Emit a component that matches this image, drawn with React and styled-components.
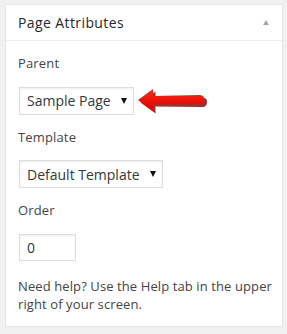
import React from 'react'
import styled, { createGlobalStyle } from 'styled-components'

const GlobalStyle = createGlobalStyle`
  html, body {
    margin: 0;
    background: #f1f1f1;
  }
  body {
    font-family: "Open Sans", "Liberation Sans", sans-serif;
    color: #444;
  }
`

const Postbox = styled.div`
  box-sizing: border-box;
  width: 278px;
  height: 323px;
  margin: 4px 0 0 5px;
  background: #fff;
  border: 1px solid #e5e5e5;
  box-shadow: 0 1px 1px rgba(0, 0, 0, 0.04);
`

const Header = styled.div`
  display: flex;
  align-items: center;
  justify-content: space-between;
  height: 35px;
  padding: 0 13px 0 12px;
  border-bottom: 1px solid #eee;
  font-size: 14px;
  letter-spacing: 0.4px;
  color: #23282d;
`

const Toggle = styled.span`
  width: 0;
  height: 0;
  border-left: 3px solid transparent;
  border-right: 3px solid transparent;
  border-bottom: 5px solid #a0a5aa;
`

const Inside = styled.div`
  padding: 0 6px 12px 12px;
`

const Label = styled.p`
  margin: 13px 0;
  font-size: 13px;
  line-height: 19.5px;
  letter-spacing: 0.15px;
  color: #444;
`

const Row = styled.div`
  display: flex;
  align-items: center;
  margin-left: 1px;
  margin-bottom: ${(p) => p.$gap || 0}px;
`

const SelectBox = styled.div`
  box-sizing: border-box;
  display: flex;
  align-items: center;
  height: 28px;
  padding: 0 6px 0 7px;
  border: 1px solid #ddd;
  box-shadow: inset 0 1px 2px rgba(0, 0, 0, 0.07);
  background: #fff;
  font-size: 14px;
  color: #32373c;
`

const Caret = styled.span`
  width: 0;
  height: 0;
  margin-left: 10px;
  border-left: 3px solid transparent;
  border-right: 3px solid transparent;
  border-top: 6px solid #111;
`

const OrderInput = styled.div`
  box-sizing: border-box;
  width: 57px;
  height: 27px;
  padding: 0 7px;
  display: flex;
  align-items: center;
  border: 1px solid #ddd;
  box-shadow: inset 0 1px 2px rgba(0, 0, 0, 0.07);
  font-size: 14px;
  color: #32373c;
`

const Help = styled.p`
  margin: 16px 0 0;
  font-size: 13px;
  line-height: 18px;
  letter-spacing: 0.1px;
  color: #444;
`

const RedArrow = () => (
  <svg width="72" height="28" viewBox="0 0 72 28" style={{ marginLeft: 3 }}>
    <defs>
      <linearGradient id="rg" x1="0" y1="0" x2="0" y2="1">
        <stop offset="0" stopColor="#ff2a1a" />
        <stop offset="1" stopColor="#d80000" />
      </linearGradient>
    </defs>
    <path
      d="M2 14 L17 3 L17 10 L64 9 Q69 9.5 68.5 14 Q68 18.5 64 18.5 L17 18 L17 25 Z"
      fill="#7a0000"
      transform="translate(1.5 1.5)"
      opacity="0.8"
    />
    <path
      d="M1 13 L16 2 L16 9 L63 8 Q67.5 8.5 67 13 Q66.5 17 63 17 L16 17 L16 24 Z"
      fill="url(#rg)"
    />
  </svg>
)

const App = () => {
  return (
    <>
      <GlobalStyle />
      <Postbox>
        <Header>
          <span>Page Attributes</span>
          <Toggle />
        </Header>
        <Inside>
          <Label>Parent</Label>
          <Row $gap={1}>
            <SelectBox>
              <span>Sample Page</span>
              <Caret />
            </SelectBox>
            <RedArrow />
          </Row>
          <Label>Template</Label>
          <Row $gap={1}>
            <SelectBox>
              <span>Default Template</span>
              <Caret />
            </SelectBox>
          </Row>
          <Label>Order</Label>
          <Row>
            <OrderInput>0</OrderInput>
          </Row>
          <Help>Need help? Use the Help tab in the upper right of your screen.</Help>
        </Inside>
      </Postbox>
    </>
  )
}

export default App
